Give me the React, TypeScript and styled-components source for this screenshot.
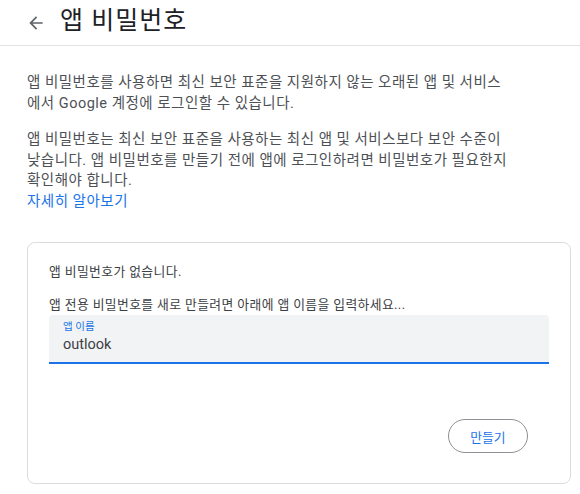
import React from "react";
import styled, { createGlobalStyle } from "styled-components";

const GlobalStyle = createGlobalStyle`
  html, body {
    margin: 0;
    padding: 0;
    background: #ffffff;
  }
  body {
    font-family: Roboto, "Noto Sans CJK KR", "Noto Sans", sans-serif;
    color: #202124;
  }
  * { box-sizing: border-box; }
`;

const Page = styled.div`
  width: 580px;
  min-height: 494px;
  background: #ffffff;
`;

const Header = styled.header`
  height: 46px;
  display: flex;
  align-items: center;
  padding: 0 0 4px 26px;
  border-bottom: 1px solid #e3e3e3;
`;

const BackButton = styled.span`
  display: flex;
  align-items: center;
  width: 20px;
  height: 20px;
  margin-top: 5px;
  color: #5f6368;
`;

const Title = styled.h1`
  margin: 0 0 0 14px;
  font-size: 25px;
  font-weight: 400;
  letter-spacing: 1px;
  line-height: 30px;
  color: #202124;
`;

const Content = styled.main`
  padding: 27px 9px 0 27px;
`;

const Paragraph = styled.p<{ $gap?: number }>`
  margin: 0 0 ${(p) => p.$gap ?? 0}px 0;
  font-size: 14.5px;
  letter-spacing: 0.5px;
  line-height: 20.5px;
  color: #4d5156;
  white-space: nowrap;
`;

const Link = styled.a`
  display: block;
  font-size: 14.5px;
  letter-spacing: 0.5px;
  line-height: 20.5px;
  color: #1a73e8;
  text-decoration: none;
`;

const Card = styled.section`
  margin-top: 30px;
  border: 1px solid #dadce0;
  border-radius: 8px;
  padding: 20px 21px 30px 21px;
  display: flex;
  flex-direction: column;
`;

const CardText = styled.p<{ $gap?: number }>`
  margin: 0 0 ${(p) => p.$gap ?? 0}px 0;
  font-size: 12.8px;
  letter-spacing: 0.4px;
  line-height: 18px;
  color: #3c4043;
`;

const Field = styled.div`
  background: #f1f3f4;
  border-radius: 4px 4px 0 0;
  border-bottom: 2px solid #1a73e8;
  padding: 5px 14px 7px 14px;
  display: flex;
  flex-direction: column;
`;

const FieldLabel = styled.label`
  font-size: 10.5px;
  line-height: 14px;
  color: #1a73e8;
`;

const FieldValue = styled.span`
  font-size: 14.5px;
  line-height: 21px;
  color: #3c4043;
`;

const Actions = styled.div`
  display: flex;
  justify-content: flex-end;
  margin-top: 55px;
  padding-right: 21px;
`;

const PillButton = styled.button`
  width: 80px;
  height: 34px;
  border: 1px solid #8d9196;
  border-radius: 17px;
  background: #ffffff;
  color: #1a73e8;
  font-family: Roboto, "Noto Sans CJK KR", sans-serif;
  font-size: 12.8px;
  cursor: pointer;
`;

const ArrowBack = () => (
  <svg width="20" height="20" viewBox="0 0 24 24" fill="currentColor">
    <path d="M20 11H7.83l5.59-5.59L12 4l-8 8 8 8 1.41-1.41L7.83 13H20v-2z" />
  </svg>
);

export default function App() {
  return (
    <>
      <GlobalStyle />
      <Page>
        <Header>
          <BackButton>
            <ArrowBack />
          </BackButton>
          <Title>앱 비밀번호</Title>
        </Header>
        <Content>
          <Paragraph $gap={16}>
            앱 비밀번호를 사용하면 최신 보안 표준을 지원하지 않는 오래된 앱 및 서비스
            <br />
            에서 Google 계정에 로그인할 수 있습니다.
          </Paragraph>
          <Paragraph>
            앱 비밀번호는 최신 보안 표준을 사용하는 최신 앱 및 서비스보다 보안 수준이
            <br />
            낮습니다. 앱 비밀번호를 만들기 전에 앱에 로그인하려면 비밀번호가 필요한지
            <br />
            확인해야 합니다.
          </Paragraph>
          <Link href="#">자세히 알아보기</Link>
          <Card>
            <CardText $gap={15}>앱 비밀번호가 없습니다.</CardText>
            <CardText $gap={1}>
              앱 전용 비밀번호를 새로 만들려면 아래에 앱 이름을 입력하세요...
            </CardText>
            <Field>
              <FieldLabel>앱 이름</FieldLabel>
              <FieldValue>outlook</FieldValue>
            </Field>
            <Actions>
              <PillButton>만들기</PillButton>
            </Actions>
          </Card>
        </Content>
      </Page>
    </>
  );
}
